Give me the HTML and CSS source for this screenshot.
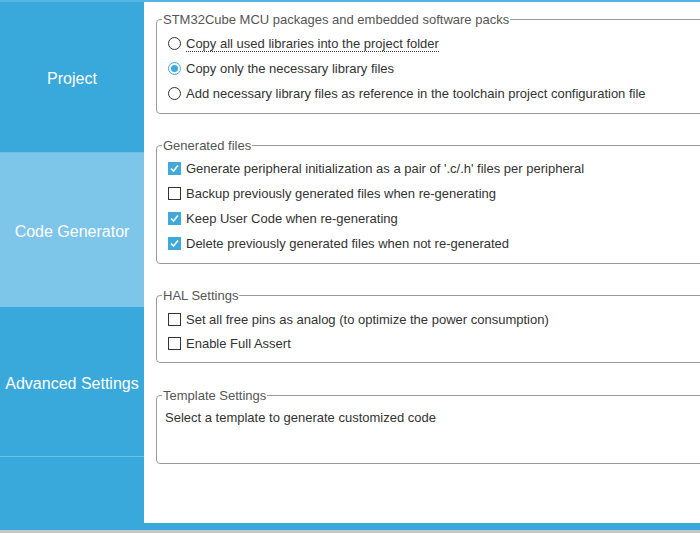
FILE: index.html
```html
<!DOCTYPE html>
<html>
<head>
<meta charset="utf-8">
<link rel="stylesheet" href="styles.css">
</head>
<body>
<div class="topline"></div>
<div class="frame">
  <nav class="sidebar">
    <div class="tab tab-project">Project</div>
    <div class="tab tab-code active">Code Generator</div>
    <div class="tab tab-adv">Advanced Settings</div>
    <div class="tab-rest"></div>
  </nav>
  <main class="panel">
    <fieldset class="group g1">
      <legend>STM32Cube MCU packages and embedded software packs</legend>
      <label class="row"><span class="radio"></span><span class="focus">Copy all used libraries into the project folder</span></label>
      <label class="row"><span class="radio on"></span><span>Copy only the necessary library files</span></label>
      <label class="row"><span class="radio"></span><span>Add necessary library files as reference in the toolchain project configuration file</span></label>
    </fieldset>
    <fieldset class="group g2">
      <legend>Generated files</legend>
      <label class="row"><span class="check on"><svg viewBox="0 0 13 13" width="13" height="13"><path d="M3 6.5 L5.5 9 L10 3.5" fill="none" stroke="#fff" stroke-width="1.6"/></svg></span><span>Generate peripheral initialization as a pair of '.c/.h' files per peripheral</span></label>
      <label class="row"><span class="check"></span><span>Backup previously generated files when re-generating</span></label>
      <label class="row"><span class="check on"><svg viewBox="0 0 13 13" width="13" height="13"><path d="M3 6.5 L5.5 9 L10 3.5" fill="none" stroke="#fff" stroke-width="1.6"/></svg></span><span>Keep User Code when re-generating</span></label>
      <label class="row"><span class="check on"><svg viewBox="0 0 13 13" width="13" height="13"><path d="M3 6.5 L5.5 9 L10 3.5" fill="none" stroke="#fff" stroke-width="1.6"/></svg></span><span>Delete previously generated files when not re-generated</span></label>
    </fieldset>
    <fieldset class="group g3">
      <legend>HAL Settings</legend>
      <label class="row"><span class="check"></span><span>Set all free pins as analog (to optimize the power consumption)</span></label>
      <label class="row"><span class="check"></span><span>Enable Full Assert</span></label>
    </fieldset>
    <fieldset class="group g4">
      <legend>Template Settings</legend>
      <div class="note">Select a template to generate customized code</div>
    </fieldset>
  </main>
</div>
<div class="bottom"></div>
</body>
</html>
```
FILE: styles.css
```css
html, body {
  margin: 0;
  padding: 0;
  width: 700px;
  height: 533px;
  overflow: hidden;
  background: #39a8db;
  font-family: "Liberation Sans", Arial, sans-serif;
}
.topline {
  height: 2px;
  background: #55b6e4;
}
.frame {
  display: flex;
  height: 521px;
}
.sidebar {
  width: 144px;
  flex: none;
  display: flex;
  flex-direction: column;
  background: #39a8db;
}
.tab {
  display: flex;
  align-items: center;
  justify-content: center;
  color: #fff;
  font-size: 16px;
  white-space: nowrap;
  box-sizing: border-box;
}
.tab-project {
  height: 151px;
  border-bottom: 1px solid #6cc0e8;
  padding-top: 4px;
}
.tab-code {
  height: 154px;
  background: #7dc5e9;
  padding-top: 3px;
}
.tab-adv {
  height: 150px;
  border-bottom: 1px solid #6cc0e8;
  padding-top: 5px;
}
.tab-rest {
  flex: 1;
}
.panel {
  flex: 1;
  background: #fff;
  overflow: hidden;
  padding: 10px 0 0 12px;
}
.group {
  width: 600px;
  margin: 0;
  padding: 3px 0 0 8px;
  border: 1px solid #9a9a9a;
  border-radius: 4px;
  color: #333;
  font-size: 13px;
  box-sizing: border-box;
}
.group legend {
  padding: 0 1px;
  margin-left: -3px;
  color: #555;
  font-size: 13px;
}
.g1 { height: 102px; padding-top: 4px; }
.g2 { height: 126px; margin-top: 24px; }
.g3 { height: 75px; margin-top: 24px; padding-top: 4px; }
.g3 .row { height: 24px; }
.g4 { height: 76px; margin-top: 25px; }
.row {
  display: flex;
  align-items: center;
  height: 25px;
  gap: 5px;
}
.radio {
  width: 11px;
  height: 11px;
  border: 1px solid #333;
  border-radius: 50%;
  box-sizing: content-box;
  display: flex;
  align-items: center;
  justify-content: center;
  margin-left: 3px;
}
.radio.on {
  border-color: #3fa9dc;
}
.radio.on::after {
  content: "";
  width: 7px;
  height: 7px;
  border-radius: 50%;
  background: #3fa9dc;
}
.check {
  width: 11px;
  height: 11px;
  border: 1px solid #333;
  margin-left: 3px;
  display: flex;
}
.check.on {
  border-color: #3fa9dc;
  background: #3fa9dc;
}
.check svg {
  margin: -1px;
}
.focus {
  border-bottom: 1px dotted #333;
}
.note {
  margin-top: 4px;
}
.bottom {
  height: 7px;
  background: #39a8db;
  border-bottom: 3px solid #c8c8c8;
}
```
